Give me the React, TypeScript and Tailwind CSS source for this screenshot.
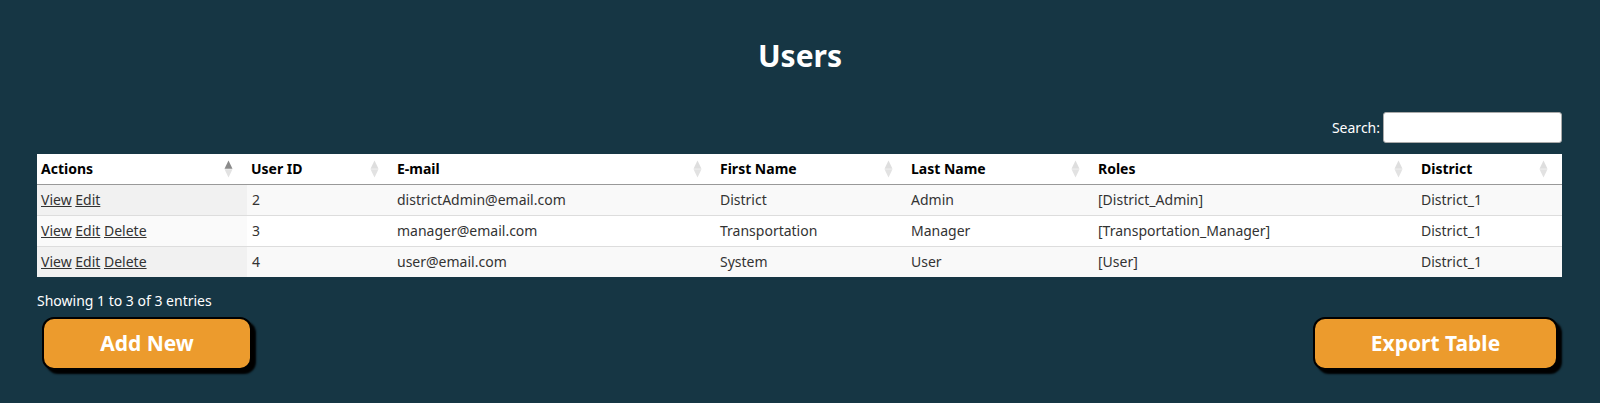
import React from "react";

const font = { fontFamily: '"Noto Sans", "Open Sans", sans-serif' };

function SortIcon({ active }: { active?: boolean }) {
  return (
    <svg width="9" height="18" viewBox="0 0 9 18" className="shrink-0">
      <polygon points="4.5,0.5 8.5,8.7 0.5,8.7" fill={active ? "#8a8a8a" : "#dedede"} />
      <polygon points="4.5,17.5 8.5,9.3 0.5,9.3" fill="#e2e2e2" />
    </svg>
  );
}

const cols = [
  { name: "Actions", w: "w-[210px]", active: true },
  { name: "User ID", w: "w-[146px]" },
  { name: "E-mail", w: "w-[323px]" },
  { name: "First Name", w: "w-[191px]" },
  { name: "Last Name", w: "w-[187px]" },
  { name: "Roles", w: "w-[323px]" },
  { name: "District", w: "w-[145px]" },
];

const rows = [
  { actions: ["View", "Edit"], id: "2", email: "districtAdmin@email.com", first: "District", last: "Admin", roles: "[District_Admin]", district: "District_1" },
  { actions: ["View", "Edit", "Delete"], id: "3", email: "manager@email.com", first: "Transportation", last: "Manager", roles: "[Transportation_Manager]", district: "District_1" },
  { actions: ["View", "Edit", "Delete"], id: "4", email: "user@email.com", first: "System", last: "User", roles: "[User]", district: "District_1" },
];

export default function App() {
  return (
    <div className="h-[403px] w-full bg-[#163644] overflow-hidden" style={font}>
      <h1 className="pt-[36px] text-center text-[30px] leading-[40px] font-bold text-white">Users</h1>
      <div className="mt-[36px] flex items-center justify-end pr-[38px]">
        <label className="text-[14px] text-white mr-[3px]">Search:</label>
        <input className="w-[179px] h-[31px] bg-white rounded-[3px] border border-[#aaa]" />
      </div>
      <div className="mx-[37px] mt-[11px]">
        <table className="w-[1525px] border-collapse table-fixed text-[14px]">
          <thead>
            <tr className="bg-white h-[30px] border-b border-[#999]">
              {cols.map((c) => (
                <th key={c.name} className={`${c.w} text-left font-bold text-black px-[4px] py-0`}>
                  <div className="flex items-center justify-between pr-[10px]">
                    <span>{c.name}</span>
                    <SortIcon active={c.active} />
                  </div>
                </th>
              ))}
            </tr>
          </thead>
          <tbody>
            {rows.map((r, i) => {
              const odd = i % 2 === 0;
              return (
                <tr key={r.id} className={`h-[31px] border-t border-[#ddd] text-[#333] ${odd ? "bg-[#f9f9f9]" : "bg-white"}`}>
                  <td className={`px-[4px] ${odd ? "bg-[#f1f1f1]" : "bg-[#fafafa]"}`}>
                    {r.actions.map((a, j) => (
                      <React.Fragment key={a}>
                        {j > 0 ? " " : ""}
                        <a className="underline text-[#333] cursor-pointer">{a}</a>
                      </React.Fragment>
                    ))}
                  </td>
                  <td className="px-[5px]">{r.id}</td>
                  <td className="px-[4px]">{r.email}</td>
                  <td className="px-[4px]">{r.first}</td>
                  <td className="px-[4px]">{r.last}</td>
                  <td className="px-[4px]">{r.roles}</td>
                  <td className="px-[4px]">{r.district}</td>
                </tr>
              );
            })}
          </tbody>
        </table>
      </div>
      <div className="mx-[37px] mt-[14px] text-[14px] leading-[20px] text-white">Showing 1 to 3 of 3 entries</div>
      <div className="mt-[6px] flex justify-between pl-[42px] pr-[42px]">
        <button className="w-[210px] h-[53px] rounded-[12px] border-2 border-black bg-[#ec9b2d] text-white font-bold text-[21px] shadow-[4px_4px_2px_#000]">
          Add New
        </button>
        <button className="w-[245px] h-[53px] rounded-[12px] border-2 border-black bg-[#ec9b2d] text-white font-bold text-[21px] shadow-[4px_4px_2px_#000]">
          Export Table
        </button>
      </div>
    </div>
  );
}
